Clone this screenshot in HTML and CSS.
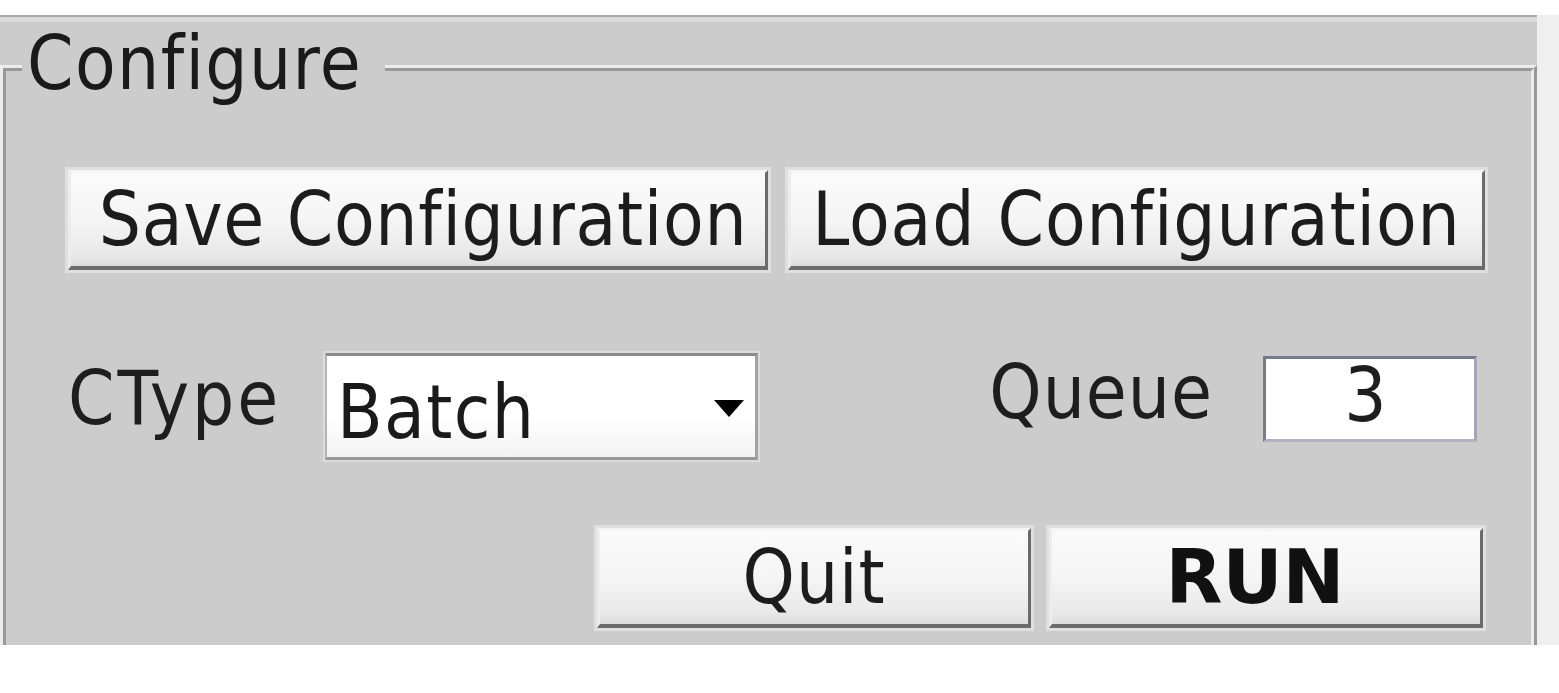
FILE: index.html
```html
<!DOCTYPE html>
<html lang="en">
<head>
<meta charset="utf-8">
<title>Configure</title>
<link rel="stylesheet" href="styles.css">
</head>
<body>
<div class="screen">
  <div class="panel">
    <fieldset class="group">
      <legend class="group-title">Configure</legend>
      <div class="group-body">
        <div class="row row-config">
          <button class="btn btn-wide btn-save" type="button">Save Configuration</button>
          <button class="btn btn-wide btn-load" type="button">Load Configuration</button>
        </div>
        <div class="row-options">
          <span class="field-label ctype-label">CType</span>
          <div class="combo">
            <span class="combo-value">Batch</span>
            <svg class="combo-arrow" viewBox="0 0 30 17" width="30" height="17" aria-hidden="true"><polygon points="0,0 30,0 15,17" fill="#000"/></svg>
          </div>
          <span class="field-label queue-label">Queue</span>
          <div class="entry">3</div>
        </div>
        <div class="row row-actions">
          <button class="btn btn-action" type="button">Quit</button>
          <button class="btn btn-action btn-run" type="button">RUN</button>
        </div>
      </div>
    </fieldset>
  </div>
  <div class="side-strip"></div>
</div>
</body>
</html>
```
FILE: styles.css
```css
html, body {
  margin: 0;
  padding: 0;
  background: #ffffff;
}

body {
  font-family: "DejaVu Sans Condensed", "DejaVu Sans", sans-serif;
  font-stretch: semi-condensed;
  font-size: 74px;
  letter-spacing: 1px;
  color: #1c1c1c;
}

.screen {
  display: flex;
  margin-top: 15px;
  height: 630px;
}

.panel {
  box-sizing: border-box;
  width: 1537px;
  height: 630px;
  background: #cccccc;
  border-top: 2px solid #a9a9a9;
  box-shadow: inset 0 5px 0 #dbdbdb;
  overflow: hidden;
}

.side-strip {
  flex: 1;
  background: #efefef;
}

.group {
  margin: 3px 0 0 0;
  padding: 0;
  border: 6px ridge #ececec;
  min-width: 0;
}

.group-title {
  margin-left: 16px;
  padding: 0 23px 10px 5px;
  line-height: normal;
  letter-spacing: 1.4px;
  color: #1a1a1a;
}

.group-body {
  padding: 54px 0 40px 62px;
  display: flex;
  flex-direction: column;
}

.row {
  display: flex;
}

.row-config {
  gap: 20px;
}

.btn {
  box-sizing: border-box;
  display: flex;
  align-items: center;
  justify-content: center;
  height: 100px;
  padding: 0 0 2px 0;
  margin: 0;
  font: inherit;
  font-stretch: semi-condensed;
  letter-spacing: 0.9px;
  line-height: 1;
  color: #1c1c1c;
  background: linear-gradient(to bottom, #fafafa 0%, #f5f5f5 50%, #e8e8e8 88%, #dddddd 100%);
  border-style: solid;
  border-width: 3px 3px 4px 3px;
  border-color: #f4f4f4 #6b6b6b #6b6b6b #ececec;
  box-shadow: 0 0 0 3px #dfdfdf;
  cursor: default;
}

.btn-save {
  width: 700px;
  padding-left: 10px;
  letter-spacing: 0.7px;
}

.btn-load {
  width: 697px;
}

.row-options {
  margin-top: 83px;
  display: grid;
  grid-template-columns: 257px 433px 1fr 214px;
  align-items: start;
  width: 1409px;
}

.field-label {
  line-height: normal;
  color: #1e1e1e;
}

.ctype-label {
  margin-top: 2px;
  letter-spacing: 3px;
}

.combo {
  box-sizing: border-box;
  height: 107px;
  display: flex;
  align-items: center;
  justify-content: space-between;
  padding: 0 11px 0 10px;
  background: linear-gradient(to bottom, #ffffff 0%, #ffffff 60%, #f2f2f2 100%);
  border-style: solid;
  border-width: 3px 3px 3px 2px;
  border-color: #8a8a8a #a2a2a2 #979797 #b4b4b4;
  box-shadow: 0 0 0 2px #dcdcdc;
}

.combo-value {
  line-height: normal;
  padding-top: 10px;
  letter-spacing: 1.4px;
  color: #1a1a1a;
}

.combo-arrow {
  display: block;
  margin-top: 4px;
}

.queue-label {
  justify-self: end;
  margin-right: 50px;
  margin-top: -4px;
}

.entry {
  box-sizing: border-box;
  height: 86px;
  margin-top: 3px;
  text-align: center;
  line-height: 72px;
  padding: 0 8px 8px 0;
  background: #ffffff;
  border-style: solid;
  border-width: 3px;
  border-color: #767b8e #a3a7b6 #b0b4c2 #767b8e;
  color: #1e1e1e;
}

.row-actions {
  margin-top: 68px;
  justify-content: flex-end;
  gap: 18px;
  width: 1415px;
}

.btn-action {
  width: 434px;
}

.btn-run {
  font-family: "DejaVu Sans", sans-serif;
  font-weight: bold;
  font-stretch: normal;
  letter-spacing: 0;
  padding-right: 22px;
  color: #111111;
}
```
